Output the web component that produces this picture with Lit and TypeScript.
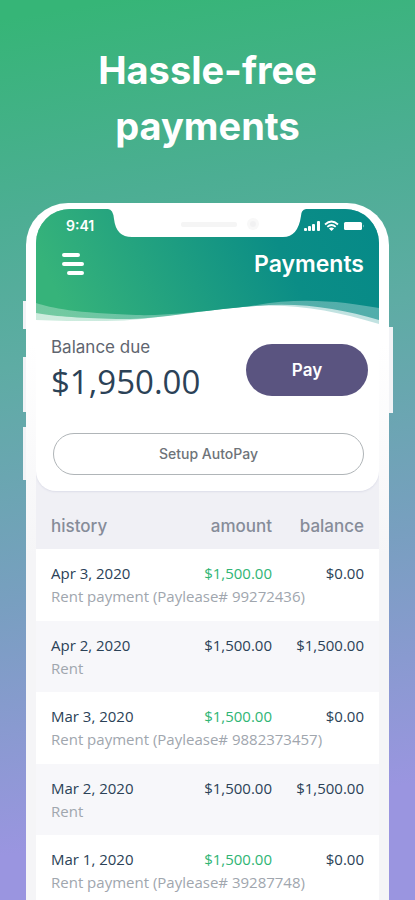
import { LitElement, html, css, svg } from "lit";
import { customElement } from "lit/decorators.js";
import { classMap } from "lit/directives/class-map.js";

interface Entry {
  date: string;
  note: string;
  amount: string;
  balance: string;
  paid: boolean;
}

const entries: Entry[] = [
  { date: "Apr 3, 2020", note: "Rent payment (Paylease# 99272436)", amount: "$1,500.00", balance: "$0.00", paid: true },
  { date: "Apr 2, 2020", note: "Rent", amount: "$1,500.00", balance: "$1,500.00", paid: false },
  { date: "Mar 3, 2020", note: "Rent payment (Paylease# 9882373457)", amount: "$1,500.00", balance: "$0.00", paid: true },
  { date: "Mar 2, 2020", note: "Rent", amount: "$1,500.00", balance: "$1,500.00", paid: false },
  { date: "Mar 1, 2020", note: "Rent payment (Paylease# 39287748)", amount: "$1,500.00", balance: "$0.00", paid: true },
];

const waves = svg`
  <defs>
    <linearGradient id="sea" x1="0" y1="0.4" x2="1" y2="0.25">
      <stop offset="0" stop-color="#36b37a" />
      <stop offset="0.7" stop-color="#0b8d86" />
      <stop offset="1" stop-color="#068a88" />
    </linearGradient>
  </defs>
  <path fill="url(#sea)" opacity="0.25" d="M0 0H343V115C300 102 262 95 222 97C160 100 120 112 70 112C40 112 20 112 0 111Z" />
  <path fill="url(#sea)" opacity="0.6" d="M0 0H343V111C305 100 265 93 220 97C160 101 125 111 80 110C40 109 15 107 0 104Z" />
  <path fill="url(#sea)" d="M0 0H343V99C310 93 265 87 215 97C170 102 130 107 100 106C40 104 15 99 0 94Z" />`;

@customElement("app-root")
export class AppRoot extends LitElement {
  static styles = css`
    :host {
      display: flex;
      flex-direction: column;
      height: 100vh;
      overflow: hidden;
      background: linear-gradient(170deg, #36b577 2%, #4cae93 22%, #5eaca4 38%, #789fc0 62%, #9a95e0 88%);
      font-family: "Open Sans", "Noto Sans", sans-serif;
      color: #2b4257;
    }
    * { box-sizing: border-box; }
    h1, h2, p { margin: 0; }
    .headline {
      padding: 42px 24px 49px;
      text-align: center;
      color: #fff;
      font: 700 38px/56px Inter, sans-serif;
    }
    .headline span { display: block; }
    .phone {
      position: relative;
      flex: none;
      margin: 0 26px;
      padding: 6px 10px 0;
      border-radius: 42px 42px 0 0;
      background: linear-gradient(#fff 20%, #f5f5f7 50%);
    }
    .key {
      position: absolute;
      width: 3px;
      background: #f2f3f6;
    }
    .mute { left: -3px; top: 98px; height: 28px; }
    .up { left: -3px; top: 154px; height: 55px; }
    .down { left: -3px; top: 224px; height: 53px; }
    .power { right: -4px; top: 124px; height: 86px; width: 4px; }
    .screen {
      border-radius: 34px 34px 0 0;
      overflow: hidden;
      background: #f0f0f5;
    }
    .top {
      border-radius: 0 0 20px 20px;
      background: #fff;
      box-shadow: 0 1px 2px #dcdde8;
    }
    .hero {
      position: relative;
      height: 122px;
      color: #fff;
    }
    .waves, .notch {
      position: absolute;
      top: 0;
      left: 0;
      width: 100%;
      height: 100%;
    }
    .notch { left: 50%; width: 198px; height: 28px; margin-left: -100px; }
    .status, .bar {
      position: relative;
      display: flex;
      justify-content: space-between;
      align-items: center;
    }
    .status { height: 34px; padding: 0 15px 0 30px; font: 600 14px/16px Inter, sans-serif; }
    .bar { height: 42px; padding: 0 15px 0 25px; }
    .bar h2 { font: 600 23px/28px Inter, sans-serif; }
    button { border: 0; cursor: pointer; }
    .menu { padding: 0; background: none; line-height: 0; }
    .due {
      display: flex;
      justify-content: space-between;
      align-items: flex-start;
      padding: 6px 11px 0 15px;
    }
    .label { font: 400 17px/20px Inter, sans-serif; color: #60656f; }
    .sum { font-size: 33px; line-height: 50px; font-weight: 500; }
    .pay {
      width: 122px;
      height: 52px;
      margin-top: 7px;
      border-radius: 26px;
      background: #5a5480;
      color: #fff;
      font: 600 17px/24px Inter, sans-serif;
    }
    .auto-row { padding: 26px 15px 16px 17px; }
    .auto {
      width: 100%;
      height: 42px;
      border: 1px solid #b0b5b8;
      border-radius: 21px;
      background: #fff;
      color: #6e7379;
      font: 500 14px/20px Inter, sans-serif;
    }
    table {
      width: 100%;
      border-collapse: collapse;
      font-size: 15px;
      line-height: 23px;
    }
    th {
      height: 58px;
      padding: 12px 0 0 15px;
      color: #868c99;
      text-align: left;
      font: 500 17px/24px Inter, sans-serif;
    }
    td { padding: 13px 0 0 15px; vertical-align: top; font-weight: 500; }
    .num { text-align: right; white-space: nowrap; }
    .num:last-child { width: 107px; padding-right: 15px; }
    .date { height: 36px; }
    .note { padding-top: 0; height: 36px; color: #a0a6ae; font-weight: 400; }
    tbody { background: #fff; }
    tbody.charge { background: #f7f7fa; }
    .charge .note { height: 35px; }
    .green { color: #2fb574; }
  `;

  render() {
    return html`
      <h1 class="headline"><span>Hassle-free</span><span>payments</span></h1>
      <main class="phone">
        <i class="key mute"></i><i class="key up"></i><i class="key down"></i><i class="key power"></i>
        <div class="screen">
          <section class="top">
            <header class="hero">
              <svg class="waves" viewBox="0 0 343 122" preserveAspectRatio="none" aria-hidden="true">${waves}</svg>
              <svg class="notch" viewBox="0 0 198 28" aria-hidden="true">
                <path fill="#fff" d="M0 0H198Q193 1 193 7Q190 28 175 28H24Q8 28 6 10Q5 0 0 0Z" />
                <rect x="73" y="13" width="56" height="5" rx="2" fill="#f5f5f5" />
                <circle cx="145" cy="15" r="6" fill="#f8f8f8" /><circle cx="145" cy="15" r="3" fill="#f1f1f2" />
              </svg>
              <div class="status">
                <time>9:41</time>
                <svg width="60" height="12" viewBox="0 0 60 12" fill="#fff" aria-hidden="true">
                  <rect x="0" y="8" width="3" height="3" rx="1" /><rect x="4" y="6" width="3" height="5" rx="1" />
                  <rect x="8" y="4" width="3" height="7" rx="1" /><rect x="13" y="1" width="3" height="10" rx="1" />
                  <path d="M27.500 11 24.900 8.400Q27.500 6.400 30.100 8.400Z" />
                  <path d="M21 4.500Q27.500-1.500 34 4.500M23.300 6.900Q27.500 3.200 31.700 6.900" fill="none" stroke="#fff" stroke-width="1.800" />
                  <rect x="40" y="2" width="18" height="8" rx="1.500" /><path d="M59 4.500q1.500 1.500 0 3Z" opacity=".6" />
                </svg>
              </div>
              <div class="bar">
                <button class="menu" aria-label="Menu">
                  <svg width="24" height="24" viewBox="0 0 24 24" stroke="#fff" stroke-width="4" stroke-linecap="round">
                    <path d="M3 3H17M3 12H21M8 21H21" />
                  </svg>
                </button>
                <h2>Payments</h2>
              </div>
            </header>
            <div class="due">
              <div><p class="label">Balance due</p><p class="sum">$1,950.00</p></div>
              <button class="pay">Pay</button>
            </div>
            <div class="auto-row"><button class="auto">Setup AutoPay</button></div>
          </section>
          <table>
            <thead>
              <tr><th>history</th><th class="num">amount</th><th class="num">balance</th></tr>
            </thead>
            ${entries.map((e) => html`
              <tbody class=${classMap({ charge: !e.paid })}>
                <tr>
                  <td class="date">${e.date}</td>
                  <td class=${classMap({ num: true, green: e.paid })}>${e.amount}</td>
                  <td class="num">${e.balance}</td>
                </tr>
                <tr><td class="note" colspan="3">${e.note}</td></tr>
              </tbody>`)}
          </table>
        </div>
      </main>
    `;
  }
}
